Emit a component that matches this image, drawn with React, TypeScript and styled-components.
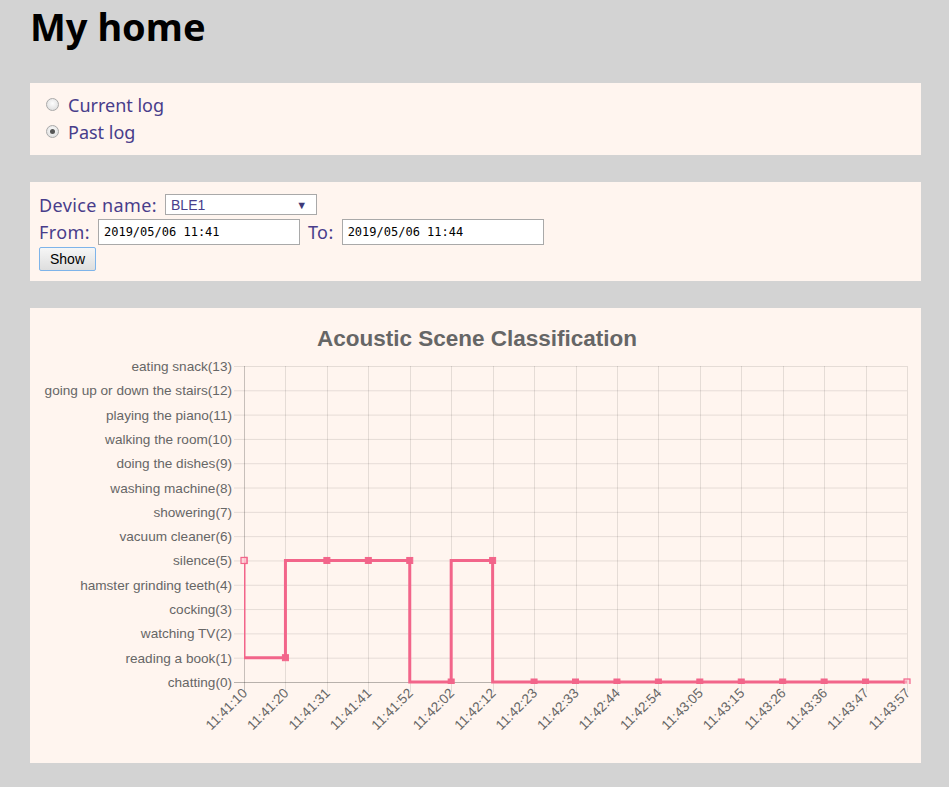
import React from "react";
import styled, { createGlobalStyle } from "styled-components";

const Global = createGlobalStyle`
  html, body { margin: 0; padding: 0; background: #d3d3d3; }
  body { font-family: "Noto Sans", "Liberation Sans", sans-serif; }
`;

const Page = styled.div`
  width: 891px;
  padding: 0 0 24px 30px;
  display: flex;
  flex-direction: column;
`;

const Title = styled.h1`
  margin: 0;
  padding: 2px 0 0 0;
  height: 83px;
  box-sizing: border-box;
  font-family: "Noto Sans", "Liberation Sans", sans-serif;
  font-weight: 700;
  font-size: 38px;
  line-height: 48px;
  color: #000;
`;

const Panel = styled.section<{ $h: number; $pad?: string }>`
  background: #fff5ef;
  height: ${(p) => p.$h}px;
  box-sizing: border-box;
  padding: ${(p) => p.$pad || "0"};
  margin-bottom: 27px;
  display: flex;
  flex-direction: column;
`;

const RadioRow = styled.label`
  display: flex;
  align-items: center;
  height: 27px;
  gap: 9px;
  font-size: 18px;
  color: #483d8b;
`;

const Radio = styled.span<{ $checked?: boolean }>`
  width: 11px;
  height: 11px;
  border-radius: 50%;
  border: 1px solid #a9a9a9;
  background: radial-gradient(circle at 50% 40%, #fdfdfd, #d8d8d8);
  position: relative;
  &::after {
    content: "";
    display: ${(p) => (p.$checked ? "block" : "none")};
    position: absolute;
    left: 3px;
    top: 3px;
    width: 5px;
    height: 5px;
    border-radius: 50%;
    background: #555;
  }
`;

const FormRow = styled.div`
  display: flex;
  align-items: center;
  height: 27px;
  gap: 8px;
  font-size: 18px;
  letter-spacing: 0.4px;
  color: #483d8b;
`;

const Select = styled.div`
  width: 152px;
  height: 21px;
  box-sizing: border-box;
  border: 1px solid #a9a9a9;
  background: #fff;
  display: flex;
  align-items: center;
  justify-content: space-between;
  padding: 0 9px 0 5px;
  font-family: "Liberation Sans", sans-serif;
  font-size: 14px;
  letter-spacing: 0;
  color: #483d8b;
`;

const Arrow = styled.span`
  font-size: 11px;
  color: #3e3a78;
`;

const DateInput = styled.div`
  width: 202px;
  height: 26px;
  box-sizing: border-box;
  border: 1px solid #a9a9a9;
  background: #fff;
  display: flex;
  align-items: center;
  padding: 0 5px;
  font-family: "DejaVu Sans Mono", monospace;
  font-size: 12px;
  letter-spacing: 0;
  color: #000;
`;

const Button = styled.button`
  margin-top: 2px;
  width: 57px;
  height: 24px;
  box-sizing: border-box;
  border: 1px solid #7eb4ea;
  border-radius: 2px;
  background: linear-gradient(#f6f6f6, #dedede);
  font-family: "Liberation Sans", sans-serif;
  font-size: 14px;
  color: #000;
  padding: 0;
`;

const ChartTitle = styled.div`
  height: 50px;
  display: flex;
  align-items: flex-end;
  justify-content: center;
  padding-left: 3px;
  font-family: "Liberation Sans", Arial, sans-serif;
  font-weight: 700;
  font-size: 22.5px;
  color: #666;
  line-height: 26px;
  padding-bottom: 6px;
  box-sizing: border-box;
`;

const ChartSvg = styled.svg`
  display: block;
  font-family: "Liberation Sans", Arial, sans-serif;
`;

const labels = [
  "chatting(0)",
  "reading a book(1)",
  "watching TV(2)",
  "cocking(3)",
  "hamster grinding teeth(4)",
  "silence(5)",
  "vacuum cleaner(6)",
  "showering(7)",
  "washing machine(8)",
  "doing the dishes(9)",
  "walking the room(10)",
  "playing the piano(11)",
  "going up or down the stairs(12)",
  "eating snack(13)",
];

const times = [
  "11:41:10", "11:41:20", "11:41:31", "11:41:41", "11:41:52", "11:42:02",
  "11:42:12", "11:42:23", "11:42:33", "11:42:44", "11:42:54", "11:43:05",
  "11:43:15", "11:43:26", "11:43:36", "11:43:47", "11:43:57",
];

const values = [5, 1, 5, 5, 5, 0, 5, 0, 0, 0, 0, 0, 0, 0, 0, 0, 0];

const L = 214;
const R = 877;
const T = 8;
const B = 324;
const xs = (i: number) => L + (i * (R - L)) / (times.length - 1);
const ys = (v: number) => B - (v * (B - T)) / 13;

const Chart: React.FC = () => {
  let d = `M${xs(0)} ${ys(values[0])}`;
  for (let i = 1; i < values.length; i++) {
    d += ` V${ys(values[i])} H${xs(i)}`;
  }
  const line = "#f2658a";
  return (
    <ChartSvg width={891} height={405} viewBox="0 0 891 405">
      <defs>
        <clipPath id="plot">
          <rect x={L} y={0} width={R - L + 6} height={B + 2} />
        </clipPath>
      </defs>
      {labels.map((_, v) => (
        <line
          key={"h" + v}
          x1={L - 10}
          x2={R}
          y1={ys(v) + 0.5}
          y2={ys(v) + 0.5}
          stroke={v === 0 ? "rgba(0,0,0,0.28)" : "rgba(0,0,0,0.1)"}
          strokeWidth={1}
        />
      ))}
      {times.map((_, i) => (
        <line
          key={"v" + i}
          x1={Math.round(xs(i)) + 0.5}
          x2={Math.round(xs(i)) + 0.5}
          y1={T}
          y2={B + 10}
          stroke={i === 0 ? "rgba(0,0,0,0.22)" : "rgba(0,0,0,0.1)"}
          strokeWidth={1}
        />
      ))}
      {labels.map((t, v) => (
        <text
          key={"yl" + v}
          x={L - 12}
          y={ys(v) + 5}
          textAnchor="end"
          fontSize={13.6}
          fill="#666"
        >
          {t}
        </text>
      ))}
      {times.map((t, i) => (
        <text
          key={"xl" + i}
          transform={`translate(${xs(i) + 4} ${B + 12}) rotate(-45)`}
          textAnchor="end"
          fontSize={13.6}
          fill="#666"
        >
          {t}
        </text>
      ))}
      <g clipPath="url(#plot)">
        <path d={d} fill="none" stroke={line} strokeWidth={3} />
        {values.map((v, i) => {
          const edge = i === 0 || i === values.length - 1;
          return (
            <rect
              key={"p" + i}
              x={xs(i) - 3}
              y={ys(v) - 3}
              width={6}
              height={6}
              fill={edge ? "rgba(255,200,210,0.6)" : line}
              stroke={line}
              strokeWidth={edge ? 1.2 : 1}
            />
          );
        })}
      </g>
      <rect
        x={xs(0) - 3}
        y={ys(values[0]) - 3}
        width={6}
        height={6}
        fill="rgba(255,200,210,0.6)"
        stroke={line}
        strokeWidth={1.2}
      />
    </ChartSvg>
  );
};

export default function App() {
  return (
    <Page>
      <Global />
      <Title>My home</Title>
      <Panel $h={72} $pad="8px 0 0 16px">
        <RadioRow>
          <Radio />
          Current log
        </RadioRow>
        <RadioRow>
          <Radio $checked />
          Past log
        </RadioRow>
      </Panel>
      <Panel $h={99} $pad="9px 0 0 9px">
        <FormRow>
          Device name:
          <Select>
            BLE1
            <Arrow>▼</Arrow>
          </Select>
        </FormRow>
        <FormRow>
          From:
          <DateInput>2019/05/06 11:41</DateInput>
          To:
          <DateInput>2019/05/06 11:44</DateInput>
        </FormRow>
        <div>
          <Button>Show</Button>
        </div>
      </Panel>
      <Panel $h={455}>
        <ChartTitle>Acoustic Scene Classification</ChartTitle>
        <Chart />
      </Panel>
    </Page>
  );
}
